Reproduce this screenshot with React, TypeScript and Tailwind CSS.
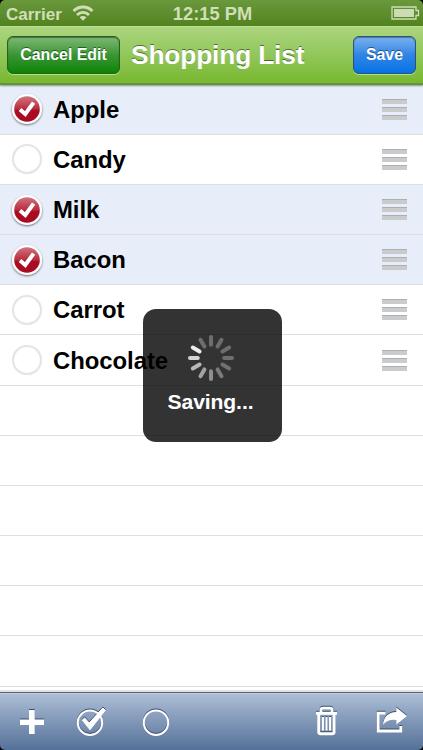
import React from "react";

const items = [
  { name: "Apple", checked: true },
  { name: "Candy", checked: false },
  { name: "Milk", checked: true },
  { name: "Bacon", checked: true },
  { name: "Carrot", checked: false },
  { name: "Chocolate", checked: false },
  { name: "", checked: false },
  { name: "", checked: false },
  { name: "", checked: false },
  { name: "", checked: false },
  { name: "", checked: false },
  { name: "", checked: false },
];

function Wifi() {
  return (
    <svg width="22" height="16" viewBox="0 0 22 16" fill="none" stroke="#d0dfb8" strokeWidth="2.9">
      <path d="M1.6 6.1C6.8 .7 15.2 .7 20.4 6.1" />
      <path d="M5 10C8.6 6.6 13.4 6.6 17 10" />
      <path d="M7.6 12.3Q11 9.6 14.4 12.3L11 15.8Z" fill="#d0dfb8" stroke="none" />
    </svg>
  );
}

function Battery() {
  return (
    <svg width="29" height="15" viewBox="0 0 29 15">
      <path d="M1 1H25V4.5H27.5V9.5H25V13H1Z" fill="none" stroke="#cddeb6" strokeWidth="1.3" />
      <rect x="3" y="3" width="20" height="8" fill="#cbdcb3" />
    </svg>
  );
}

function Marker({ checked }: { checked: boolean }) {
  return (
    <svg width="34" height="36" viewBox="0 0 34 36" className="mt-[2px]">
      {checked ? (
        <>
          <defs>
            <linearGradient id="red" x1="0" y1="0" x2="0" y2="1">
              <stop offset="0" stopColor="#cf7580" />
              <stop offset=".49" stopColor="#b92d40" />
              <stop offset=".56" stopColor="#aa0c22" />
              <stop offset="1" stopColor="#a90c20" />
            </linearGradient>
            <filter id="shade" x="-20%" y="-20%" width="140%" height="150%">
              <feDropShadow dx="0" dy="1" stdDeviation="1" floodColor="#000" floodOpacity=".6" />
            </filter>
          </defs>
          <circle cx="17" cy="17" r="15" fill="#fff" filter="url(#shade)" />
          <circle cx="17" cy="17" r="12.8" fill="url(#red)" />
          <path d="M10 17.4L15.3 22L23.6 10.6" fill="none" stroke="#fff" strokeWidth="4" />
        </>
      ) : (
        <circle cx="17" cy="17" r="14" fill="#fff" stroke="#e5e5e5" strokeWidth="2.2" />
      )}
    </svg>
  );
}

function Grip() {
  const bar = "h-[5px] w-[25px] border-t border-[#adafb2] bg-[#cacbcd]";
  return (
    <div className="flex flex-col gap-[3px]">
      <div className={bar} />
      <div className={bar} />
      <div className={bar} />
    </div>
  );
}

function Spinner() {
  const shades = ["#6e6e6e", "#6e6e6e", "#6e6e6e", "#6e6e6e", "#707070", "#7a7a7a", "#8e8e8e", "#a2a2a2", "#b9b9b9", "#d3d3d3", "#ededed", "#6e6e6e"];
  return (
    <svg width="48" height="48" viewBox="-24 -24 48 48">
      {shades.map((c, i) => (
        <line key={i} x1="0" y1="-13.2" x2="0" y2="-21" stroke={c} strokeWidth="4" strokeLinecap="round" transform={`rotate(${i * 30})`} />
      ))}
    </svg>
  );
}

function ToolbarIcons() {
  return (
    <svg width="423" height="58" viewBox="0 692 423 58" className="[filter:drop-shadow(0_-1px_0_#3e506b)]">
      <path d="M29 710H34.7V719.5H44V725H34.7V734H29V725H20V719.5H29Z" fill="#fff" />
      <g fill="none" stroke="#fff">
        <circle cx="90" cy="722.7" r="12.2" strokeWidth="2" />
        <path d="M82.3 720L84.7 718L89.2 723L102.8 708L105.3 710.2L90 729.8Z" fill="#fff" strokeWidth="1" />
        <circle cx="156" cy="722.7" r="12.2" strokeWidth="2" />
        <path d="M321 712V709.8Q321 708 323 708H330Q332 708 332 709.8V712" strokeWidth="2.6" />
        <path d="M316 713.3H337" strokeWidth="3" />
        <path d="M318.7 714V731.8Q318.7 733.7 320.6 733.7H332.2Q334.1 733.7 334.1 731.8V714" strokeWidth="3" />
        <path d="M322.9 717V730.5M326.5 717V730.5M330.1 717V730.5" strokeWidth="2.1" />
        <path d="M385.5 713.2H378.2V731H400.8V726" strokeWidth="2.8" />
      </g>
      <path d="M396.3 707.5L407 716L396.3 724.5V720Q388 718.8 383 724.7Q384 712.8 396.3 712Z" fill="#fff" />
    </svg>
  );
}

export default function App() {
  return (
    <div className="relative flex h-[750px] w-[423px] flex-col overflow-hidden bg-black font-['Liberation_Sans',Arial,sans-serif] font-bold">
      <header className="relative z-10 shrink-0 overflow-hidden rounded-t-[5px] shadow-[0_1px_2px_#0006]">
        <div className="grid h-[26px] grid-cols-3 items-center bg-linear-to-b from-[#6a983c] to-[#52831e] text-[#d0dfb8]">
          <div className="flex items-center gap-[10px] pl-[6px] text-[17px] leading-none">
            <span className="w-[56px] pt-[2px]">Carrier</span>
            <Wifi />
          </div>
          <div className="pt-[2px] pl-[2px] text-center text-[18.3px] leading-none">12:15 PM</div>
          <div className="flex justify-end pr-[3px]"><Battery /></div>
        </div>
        <div className="flex h-[59px] items-center border-t border-b-2 border-t-[#bddf98] border-b-[#659337] bg-linear-to-b from-[#acd57e] to-[#77b82c] pr-[7px] pb-px pl-[7px] text-white">
          <button className="h-[38px] w-[113px] rounded-[6px] border border-[#25621f] bg-linear-to-b from-[#7eb875] via-[#379632] to-[#078300] text-[15.9px] whitespace-nowrap shadow-[inset_0_1px_1px_#0006,0_1px_0_#b5df8a] [text-shadow:0_-1px_0_#0007]">Cancel Edit</button>
          <h1 className="flex-1 pl-[11px] text-[26.4px] leading-[30px] tracking-[-0.2px] whitespace-nowrap [text-shadow:0_-1px_0_#0007]">Shopping List</h1>
          <button className="h-[38px] w-[63px] rounded-[6px] border border-[#28547f] bg-linear-to-b from-[#79b1ee] via-[#2e85e5] to-[#0073e6] text-[15.9px] shadow-[inset_0_1px_1px_#0005,0_1px_0_#b5df8a] [text-shadow:0_-1px_0_#0007]">Save</button>
        </div>
      </header>

      <main className="min-h-0 flex-1 overflow-hidden bg-white">
        <ul className="-mt-[0.3px]">
          {items.map((item, i) => (
            <li key={i} className={`flex h-[50.16px] items-center border-b border-[#dedfe1] pr-[16px] pl-[10px] ${item.checked ? "bg-[#e8eef9]" : "bg-white"}`}>
              {item.name && (
                <>
                  <Marker checked={item.checked} />
                  <span className="flex-1 pt-px pl-[9px] text-[23.9px] leading-[28px] tracking-[-0.05px] text-black">{item.name}</span>
                  <Grip />
                </>
              )}
            </li>
          ))}
        </ul>
      </main>

      <footer className="z-10 h-[58px] shrink-0 overflow-hidden rounded-b-[5px] bg-linear-to-b from-[#b0c0d8] to-[#557198] shadow-[0_-2px_0_#e2e2e2,inset_0_1px_0_#566273,inset_0_2px_0_#c3cfe0]">
        <ToolbarIcons />
      </footer>

      <div className="absolute top-[309px] left-[143px] z-20 flex h-[133px] w-[139px] flex-col items-center rounded-[13px] bg-black/80 pt-[25px] text-white">
        <div className="pr-[3px]"><Spinner /></div>
        <div className="mt-[8px] pr-[4px] text-[21.1px] leading-[24px] tracking-[-0.1px]">Saving...</div>
      </div>
    </div>
  );
}
